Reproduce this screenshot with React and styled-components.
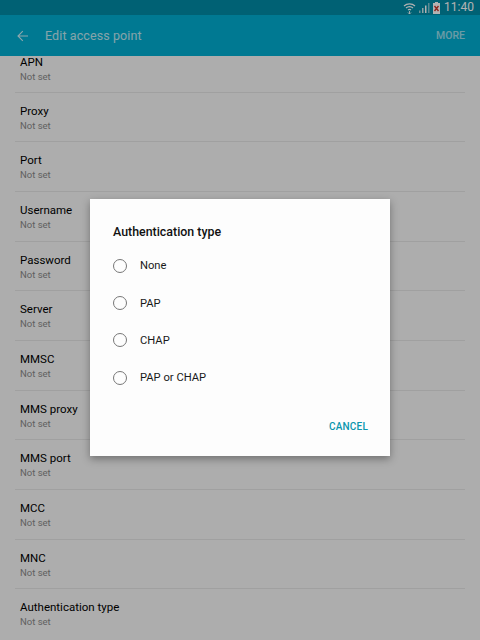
import React from "react";
import styled, { createGlobalStyle } from "styled-components";

const GlobalStyle = createGlobalStyle`
    html, body {
        margin: 0;
        padding: 0;
        background-color: #f8f8f8;
    }
    body {
        font-family: Roboto, "Noto Sans", sans-serif;
    }
`;

const Screen = styled.div`
    position: relative;
    width: 480px;
    height: 640px;
    overflow: hidden;
    background-color: #f8f8f8;
`;

const StatusBar = styled.div`
    height: 15px;
    background-color: #008ba6;
    display: flex;
    align-items: center;
    justify-content: flex-end;
    padding-right: 6px;
    gap: 3px;
    color: #ffffff;
`;

const Clock = styled.span`
    font-size: 12px;
    line-height: 15px;
    margin-left: 1px;
`;

const AppBar = styled.header`
    height: 41px;
    background-color: #00aed2;
    display: flex;
    align-items: center;
    padding: 0 15px 0 17px;
    color: #ffffff;
`;

const BarTitle = styled.h1`
    margin: 0 0 0 16px;
    flex: 1;
    font-size: 12.5px;
    font-weight: 400;
    letter-spacing: 0.1px;
    color: #ffffff;
    opacity: 0.75;
`;

const MoreButton = styled.span`
    font-size: 10.5px;
    font-weight: 500;
    opacity: 0.6;
`;

const SettingsList = styled.ul`
    list-style: none;
    margin: 0;
    padding: 0 15px;
    height: 584px;
    overflow: hidden;
`;

const SettingRow = styled.li`
    height: ${props => (props.$first ? "36.6px" : "49.7px")};
    box-sizing: border-box;
    padding-left: 5px;
    border-bottom: 1px solid #e6e6e6;
    &:last-child {
        border-bottom: none;
    }
`;

const SettingName = styled.div`
    padding-top: ${props => (props.$first ? "0" : "12px")};
    font-size: 11.5px;
    line-height: 13px;
    color: #000000;
`;

const SettingValue = styled.div`
    margin-top: 2px;
    font-size: 9.5px;
    line-height: 12px;
    color: #8a8a8a;
`;

const Scrim = styled.div`
    position: absolute;
    inset: 0;
    background-color: rgba(0, 0, 0, 0.3);
    display: flex;
    justify-content: center;
    padding-top: 199px;
    box-sizing: border-box;
`;

const Dialog = styled.div`
    width: 300px;
    height: 257px;
    box-sizing: border-box;
    background-color: #fdfdfd;
    padding: 25px 22px 0 23px;
    box-shadow: 0 3px 8px rgba(0, 0, 0, 0.35);
    display: flex;
    flex-direction: column;
`;

const DialogTitle = styled.h2`
    margin: 0 0 7px 0;
    font-size: 12.4px;
    line-height: 16px;
    font-weight: 500;
    color: #111111;
`;

const RadioRow = styled.div`
    height: 37.4px;
    display: flex;
    align-items: center;
    gap: 13px;
    font-size: 11.2px;
    color: #1a1a1a;
`;

const RadioCircle = styled.span`
    width: 12px;
    height: 12px;
    border: 1px solid #777777;
    border-radius: 50%;
    display: block;
`;

const DialogActions = styled.div`
    display: flex;
    justify-content: flex-end;
    margin-top: 24px;
`;

const CancelButton = styled.span`
    font-size: 10px;
    font-weight: 500;
    letter-spacing: 0.2px;
    color: #0a96ad;
`;

const settings = [
    "APN", "Proxy", "Port", "Username", "Password", "Server",
    "MMSC", "MMS proxy", "MMS port", "MCC", "MNC", "Authentication type",
];

const options = ["None", "PAP", "CHAP", "PAP or CHAP"];

function WifiIcon() {
    return (
        <svg width="13" height="12" viewBox="0 0 13 12" fill="none" stroke="#fff" strokeWidth="1.2">
            <path d="M1 4a8 8 0 0 1 11 0" />
            <path d="M3 6a5 5 0 0 1 7 0" />
            <path d="M5 8a2.4 2.4 0 0 1 3 0" />
            <path d="M6.5 9v3M5 10.5l1.5 1.5 1.5-1.5" strokeWidth="0.9" />
        </svg>
    );
}

function SignalIcon() {
    return (
        <svg width="11" height="10" viewBox="0 0 11 10" fill="#fff">
            <rect x="0" y="7.5" width="1.5" height="2.5" opacity="0.6" />
            <rect x="3" y="5" width="1.5" height="5" opacity="0.8" />
            <rect x="6" y="2.5" width="1.5" height="7.5" />
            <rect x="9" y="0" width="1.5" height="10" opacity="0.5" />
        </svg>
    );
}

function BatteryIcon() {
    return (
        <svg width="7" height="12" viewBox="0 0 7 12">
            <rect x="2" y="0" width="3" height="1.5" fill="#fff" />
            <rect x="0" y="1" width="7" height="11" fill="#fff" />
            <path d="M1.5 4l4 5M5.5 4l-4 5" stroke="#c8352a" strokeWidth="1.4" />
        </svg>
    );
}

function BackIcon() {
    return (
        <svg width="12" height="12" viewBox="0 0 12 12" fill="none" stroke="#fff" strokeWidth="1.1" opacity="0.8">
            <path d="M11 6H1.2M5.8 1.2 1 6l4.8 4.8" />
        </svg>
    );
}

function App() {
    return (
        <Screen>
            <GlobalStyle />
            <StatusBar>
                <WifiIcon />
                <SignalIcon />
                <BatteryIcon />
                <Clock>11:40</Clock>
            </StatusBar>
            <AppBar>
                <BackIcon />
                <BarTitle>Edit access point</BarTitle>
                <MoreButton>MORE</MoreButton>
            </AppBar>
            <SettingsList>
                {settings.map((name, index) => (
                    <SettingRow key={name} $first={index === 0}>
                        <SettingName $first={index === 0}>{name}</SettingName>
                        <SettingValue>Not set</SettingValue>
                    </SettingRow>
                ))}
            </SettingsList>
            <Scrim>
                <Dialog>
                    <DialogTitle>Authentication type</DialogTitle>
                    {options.map((option) => (
                        <RadioRow key={option}>
                            <RadioCircle />
                            {option}
                        </RadioRow>
                    ))}
                    <DialogActions>
                        <CancelButton>CANCEL</CancelButton>
                    </DialogActions>
                </Dialog>
            </Scrim>
        </Screen>
    );
}

export default App;
